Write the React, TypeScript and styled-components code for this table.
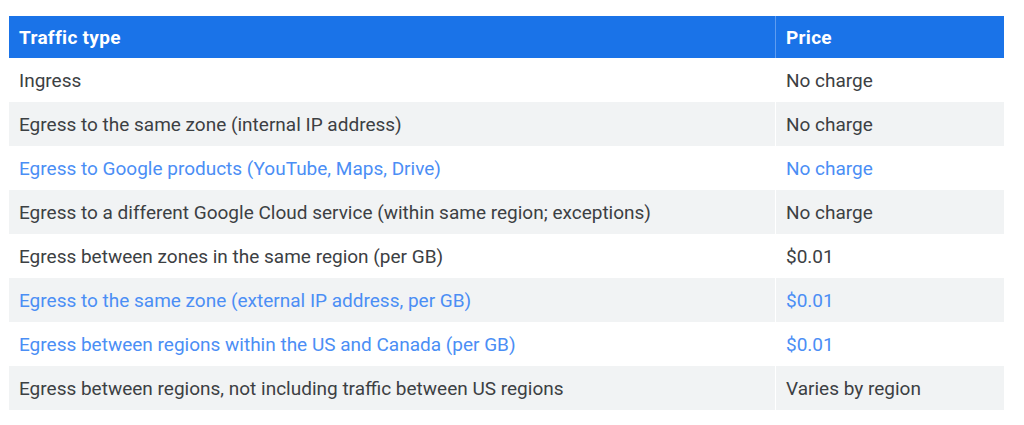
import React from 'react';
import styled, { createGlobalStyle } from 'styled-components';

const Global = createGlobalStyle`
  body {
    margin: 0;
    background: #fff;
    font-family: Roboto, "Noto Sans", Arial, sans-serif;
  }
`;

const Page = styled.div`
  padding: 16px 20px 14px 9px;
`;

const Table = styled.table`
  width: 995px;
  border-collapse: collapse;
  table-layout: fixed;
  font-size: 19px;
`;

const HeadCell = styled.th<{ $w?: number }>`
  width: ${p => (p.$w ? `${p.$w}px` : 'auto')};
  height: 42px;
  padding: 0 10px;
  background: #1a73e8;
  color: #fff;
  font-weight: 700;
  letter-spacing: 0.3px;
  text-align: left;
  border-left: 1px solid #5e9cf0;
  &:first-child {
    border-left: none;
  }
`;

const Row = styled.tr<{ $shade: boolean }>`
  background: ${p => (p.$shade ? '#f1f3f4' : '#fff')};
`;

const Cell = styled.td<{ $link: boolean }>`
  height: 44px;
  padding: 0 10px;
  color: ${p => (p.$link ? '#4b8ef5' : '#3c4043')};
  border-left: 1px solid #fff;
  &:first-child {
    border-left: none;
  }
`;

type Item = { type: string; price: string; link?: boolean };

const rows: Item[] = [
  { type: 'Ingress', price: 'No charge' },
  { type: 'Egress to the same zone (internal IP address)', price: 'No charge' },
  { type: 'Egress to Google products (YouTube, Maps, Drive)', price: 'No charge', link: true },
  { type: 'Egress to a different Google Cloud service (within same region; exceptions)', price: 'No charge' },
  { type: 'Egress between zones in the same region (per GB)', price: '$0.01' },
  { type: 'Egress to the same zone (external IP address, per GB)', price: '$0.01', link: true },
  { type: 'Egress between regions within the US and Canada (per GB)', price: '$0.01', link: true },
  { type: 'Egress between regions, not including traffic between US regions', price: 'Varies by region' },
];

export default function App() {
  return (
    <Page>
      <Global />
      <Table>
        <thead>
          <tr>
            <HeadCell>Traffic type</HeadCell>
            <HeadCell $w={208}>Price</HeadCell>
          </tr>
        </thead>
        <tbody>
          {rows.map((r, i) => (
            <Row key={i} $shade={i % 2 === 1}>
              <Cell $link={!!r.link}>{r.type}</Cell>
              <Cell $link={!!r.link}>{r.price}</Cell>
            </Row>
          ))}
        </tbody>
      </Table>
    </Page>
  );
}
